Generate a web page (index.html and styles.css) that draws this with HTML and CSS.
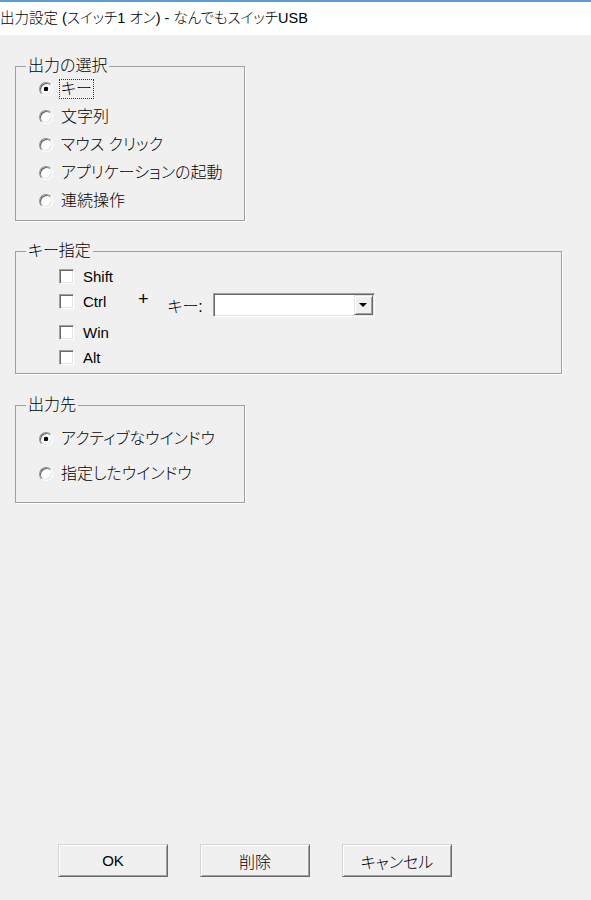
FILE: index.html
```html
<!DOCTYPE html>
<html lang="ja">
<head>
    <meta charset="UTF-8">
    <meta name="viewport" content="width=device-width, initial-scale=1.0">
    <title>出力設定</title>
    <link rel="stylesheet" href="styles.css">
</head>
<body>
    <div class="window">
        <div class="titlebar">出力設定 (スイッチ1 オン) - なんでもスイッチUSB</div>

        <div class="content">
            <fieldset class="group narrow">
                <legend>出力の選択</legend>
                <div class="options">
                    <label class="opt"><input type="radio" name="out" class="radio" checked><span class="text focus">キー</span></label>
                    <label class="opt"><input type="radio" name="out" class="radio"><span class="text">文字列</span></label>
                    <label class="opt"><input type="radio" name="out" class="radio"><span class="text">マウス クリック</span></label>
                    <label class="opt"><input type="radio" name="out" class="radio"><span class="text">アプリケーションの起動</span></label>
                    <label class="opt"><input type="radio" name="out" class="radio"><span class="text">連続操作</span></label>
                </div>
            </fieldset>

            <fieldset class="group wide">
                <legend>キー指定</legend>
                <div class="keyspec">
                    <div class="mods">
                        <label class="mod"><input type="checkbox" class="check">Shift</label>
                        <label class="mod"><input type="checkbox" class="check">Ctrl</label>
                        <label class="mod gap"><input type="checkbox" class="check">Win</label>
                        <label class="mod"><input type="checkbox" class="check">Alt</label>
                    </div>
                    <span class="plus">+</span>
                    <div class="keyline">
                        <span class="keylabel">キー:</span>
                        <div class="combo"><span class="drop"></span></div>
                    </div>
                </div>
            </fieldset>

            <fieldset class="group narrow target">
                <legend>出力先</legend>
                <div class="options">
                    <label class="opt"><input type="radio" name="dest" class="radio" checked><span class="text">アクティブなウインドウ</span></label>
                    <label class="opt"><input type="radio" name="dest" class="radio"><span class="text">指定したウインドウ</span></label>
                </div>
            </fieldset>
        </div>

        <div class="buttons">
            <button class="btn en" type="button">OK</button>
            <button class="btn" type="button">削除</button>
            <button class="btn" type="button">キャンセル</button>
        </div>
    </div>
</body>
</html>
```

FILE: styles.css
```css
body {
    margin: 0;
    background-color: #f0f0f0;
    color: #000;
    font-family: "Liberation Sans", "Noto Sans CJK JP", sans-serif;
    font-size: 16px;
    font-weight: 300;
    font-feature-settings: "palt";
}
.window {
    min-height: 100vh;
    display: flex;
    flex-direction: column;
}
.titlebar {
    background-color: #fff;
    border-top: 2px solid #5b9bd5;
    height: 33px;
    line-height: 32px;
    font-size: 14.5px;
    white-space: nowrap;
}
.content {
    padding: 22px 0 0 15px;
}

/* group boxes */
.group {
    margin: 0;
    padding: 0;
    min-inline-size: 0;
    box-sizing: border-box;
    border: 1px solid #a0a0a0;
    box-shadow: 1px 1px 0 #fff;
}
.group legend {
    margin-left: 10px;
    padding: 0 2px;
    line-height: 18px;
}
.narrow { width: 230px; }
.wide { width: 547px; margin-top: 21px; }
.target { margin-top: 22px; }

/* radio lists */
.options {
    padding: 0 0 5px 23px;
}
.opt {
    display: flex;
    align-items: center;
    height: 28px;
}
.target .options { padding: 7px 0 11px 23px; }
.target .opt { height: 35px; }
.radio {
    appearance: none;
    margin: 0 6px 0 0;
    width: 14px;
    height: 14px;
    box-sizing: border-box;
    border-radius: 50%;
    border: 1px solid;
    border-color: #909090 #fff #fff #909090;
    box-shadow: inset 1px 1px 0 #606060, inset -1px -1px 0 #e3e3e3;
    background: #fff;
}
.radio:checked {
    background: radial-gradient(circle, #000 0 2px, #fff 2.6px);
}
.text {
    line-height: 18px;
    padding: 0 1px;
    border: 1px dotted transparent;
}
.text.focus { border-color: #333; }

/* key spec */
.keyspec {
    display: flex;
    align-items: flex-start;
    padding: 4px 0 3px 43px;
}
.mods { width: 79px; }
.mod {
    display: flex;
    align-items: center;
    height: 25px;
    font-size: 15px;
}
.mod.gap { margin-top: 6px; }
.check {
    appearance: none;
    margin: 0 9px 0 0;
    width: 15px;
    height: 15px;
    box-sizing: border-box;
    border: 1px solid;
    border-color: #a0a0a0 #fff #fff #a0a0a0;
    box-shadow: inset 1px 1px 0 #696969, inset -1px -1px 0 #e3e3e3;
    background: #fff;
}
.plus {
    font-size: 18px;
    line-height: 18px;
    margin-top: 26px;
}
.keyline {
    display: flex;
    align-items: center;
    margin-top: 29px;
    margin-left: 19px;
}
.keylabel { width: 45px; }
.combo {
    width: 162px;
    height: 24px;
    box-sizing: border-box;
    display: flex;
    justify-content: flex-end;
    padding: 1px;
    background: #fff;
    border: 1px solid;
    border-color: #a0a0a0 #fff #fff #a0a0a0;
    box-shadow: inset 1px 1px 0 #696969, inset -1px -1px 0 #e3e3e3;
}
.drop {
    width: 19px;
    box-sizing: border-box;
    display: flex;
    align-items: center;
    justify-content: center;
    background: #f0f0f0;
    border: 1px solid;
    border-color: #e3e3e3 #696969 #696969 #e3e3e3;
    box-shadow: inset 1px 1px 0 #fff, inset -1px -1px 0 #a0a0a0;
}
.drop::after {
    content: "";
    border-top: 4px solid #000;
    border-left: 4px solid transparent;
    border-right: 4px solid transparent;
}

/* buttons */
.buttons {
    margin-top: auto;
    display: flex;
    gap: 32px;
    padding: 0 0 23px 58px;
}
.btn {
    width: 110px;
    height: 33px;
    box-sizing: border-box;
    padding: 0;
    font: inherit;
    color: #000;
    background: #f0f0f0;
    border: 1px solid;
    border-color: #d4d4d4 #696969 #696969 #d4d4d4;
    box-shadow: inset 1px 1px 0 #fff, inset -1px -1px 0 #a0a0a0;
}
.btn.en { font-size: 15px; }
```
